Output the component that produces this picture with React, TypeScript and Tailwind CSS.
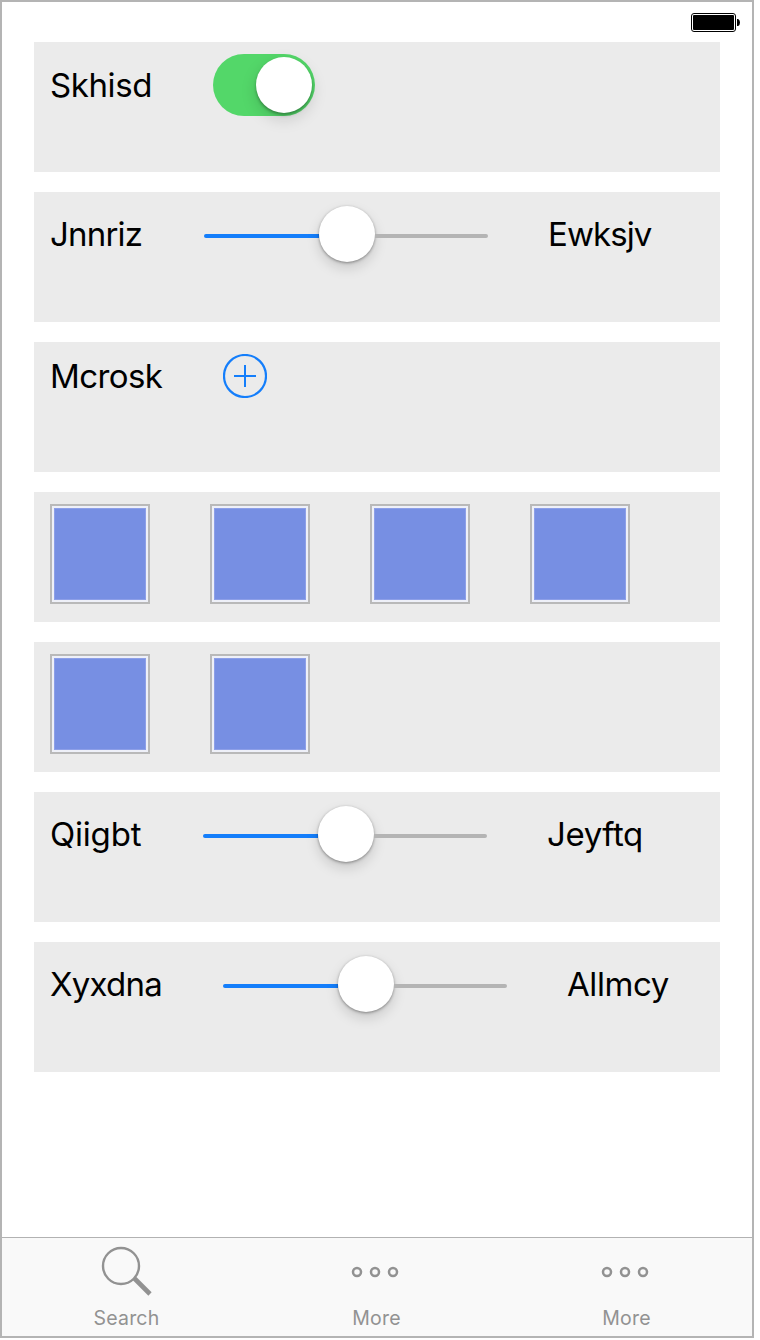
import type { ReactNode } from "react";

function Row({ children }: { children?: ReactNode }) {
  return <div className="flex h-[130px] w-[686px] items-start gap-[60px] bg-[#ebebeb] pt-3 pl-4">{children}</div>;
}

function Label({ children, className }: { children: ReactNode; className: string }) {
  return <div className={`shrink-0 whitespace-nowrap text-[33px] leading-10 text-black ${className}`}>{children}</div>;
}

function Toggle() {
  return (
    <div className="flex h-[62px] w-[102px] items-center justify-end rounded-full bg-[#53d769] pr-[3px]">
      <div className="size-14 rounded-full bg-white shadow-[0_6px_16px_rgba(0,0,0,0.15),0_2px_3px_rgba(0,0,0,0.3)]" />
    </div>
  );
}

function Slider() {
  return (
    <div className="flex h-[60px] w-[284px] shrink-0 items-center">
      <div className="mt-1 h-1 w-[115px] rounded-l-full bg-[#147efb]" />
      <div className="size-14 rounded-full bg-white shadow-[0_6px_13px_rgba(0,0,0,0.15),0_1px_3px_rgba(0,0,0,0.38)]" />
      <div className="mt-1 h-1 flex-1 rounded-r-full bg-[#b4b4b4]" />
    </div>
  );
}

function Swatch() {
  return (
    <div className="size-[100px] border-2 border-[#b9b9b9] bg-[#eef0f8] p-[2px]">
      <div className="size-full border border-[#8d9fe8] bg-[#778fe3]" />
    </div>
  );
}

function AddButton() {
  return (
    <svg width="44" height="44" viewBox="0 0 44 44" fill="none" stroke="#147efb" strokeWidth="2">
      <circle cx="22" cy="22" r="21" strokeWidth="2.2" />
      <path d="M11 22h22M22 11v22" />
    </svg>
  );
}

function SearchIcon() {
  return (
    <svg width="52" height="52" viewBox="0 0 52 52" fill="none" stroke="#929292">
      <circle cx="20" cy="20" r="18" strokeWidth="2.4" />
      <path d="M33 32L49 48" strokeWidth="4.6" />
    </svg>
  );
}

function MoreIcon() {
  return (
    <svg width="52" height="52" viewBox="0 0 52 52" fill="none" stroke="#929292" strokeWidth="2.5">
      <circle cx="6" cy="26" r="4" />
      <circle cx="24" cy="26" r="4" />
      <circle cx="42" cy="26" r="4" />
    </svg>
  );
}

function Tab({ icon, children }: { icon: ReactNode; children: ReactNode }) {
  return (
    <div className="flex w-[250px] flex-col items-center pt-2">
      {icon}
      <div className="mt-2 mr-px text-[19.5px] leading-6 tracking-[0.2px] text-[#929292]">{children}</div>
    </div>
  );
}

export default function App() {
  return (
    <div className="min-h-[1340px] bg-white font-['Inter',sans-serif]">
      <div className="flex h-[1338px] w-[754px] flex-col border-2 border-[#b4b4b4] bg-white">
        <div className="flex h-10 shrink-0 justify-end pt-[11px] pr-3">
          <svg width="49" height="19" viewBox="0 0 49 19">
            <rect x="0.5" y="0.5" width="44" height="18" rx="2.5" fill="white" stroke="black" />
            <rect x="2" y="2" width="41" height="15" rx="1" fill="black" />
            <path d="M46 6h1.2q1.8 1 1.8 3.5t-1.8 3.5H46z" fill="black" />
          </svg>
        </div>
        <div className="flex flex-1 flex-col gap-5 pl-8">
          <Row>
            <Label className="mt-[11px] w-[103px] tracking-[-0.4px]">Skhisd</Label>
            <Toggle />
          </Row>
          <Row>
            <Label className="mt-[10px] w-[94px] tracking-[-0.8px]">Jnnriz</Label>
            <Slider />
            <Label className="mt-[10px] tracking-[-0.9px]">Ewksjv</Label>
          </Row>
          <Row>
            <Label className="mt-[2px] w-[113px] tracking-[-0.6px]">Mcrosk</Label>
            <AddButton />
          </Row>
          <Row>
            <Swatch />
            <Swatch />
            <Swatch />
            <Swatch />
          </Row>
          <Row>
            <Swatch />
            <Swatch />
          </Row>
          <Row>
            <Label className="mt-[10px] w-[93px] tracking-[-0.2px]">Qiigbt</Label>
            <Slider />
            <Label className="mt-[10px] tracking-[-0.4px]">Jeyftq</Label>
          </Row>
          <Row>
            <Label className="mt-[10px] w-[113px] tracking-[-0.75px]">Xyxdna</Label>
            <Slider />
            <Label className="mt-[10px] tracking-[-0.4px]">Allmcy</Label>
          </Row>
        </div>
        <div className="flex h-[99px] shrink-0 border-t border-[#b2b2b2] bg-[#f9f9f9]">
          <Tab icon={<SearchIcon />}>Search</Tab>
          <Tab icon={<MoreIcon />}>More</Tab>
          <Tab icon={<MoreIcon />}>More</Tab>
        </div>
      </div>
    </div>
  );
}
